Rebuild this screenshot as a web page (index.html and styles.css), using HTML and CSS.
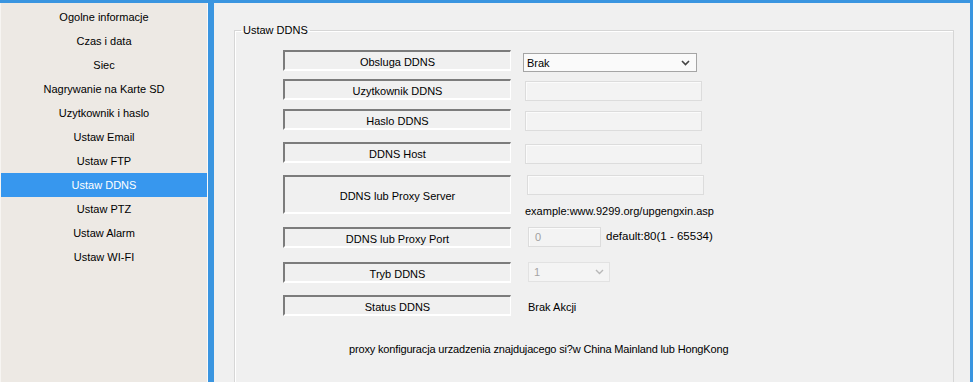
FILE: index.html
```html
<!DOCTYPE html>
<html lang="pl">
<head>
  <meta charset="UTF-8">
  <title>Ustaw DDNS</title>
  <link rel="stylesheet" href="styles.css">
</head>
<body>
  <div class="top-bar"></div>
  <div class="frame">
    <!-- menu po lewej -->
    <ul class="menu">
      <li>Ogolne informacje</li>
      <li>Czas i data</li>
      <li>Siec</li>
      <li>Nagrywanie na Karte SD</li>
      <li>Uzytkownik i haslo</li>
      <li>Ustaw Email</li>
      <li>Ustaw FTP</li>
      <li class="active">Ustaw DDNS</li>
      <li>Ustaw PTZ</li>
      <li>Ustaw Alarm</li>
      <li>Ustaw WI-FI</li>
    </ul>
    <div class="splitter"></div>
    <div class="content">
      <fieldset class="group">
        <legend>Ustaw DDNS</legend>
        <div class="form">
          <div class="row h29">
            <div class="label">Obsluga DDNS</div>
            <div class="select">
              <span>Brak</span>
              <svg width="9" height="6" viewBox="0 0 9 6"><polyline points="1,1 4.5,4.5 8,1" fill="none" stroke="#444" stroke-width="1.6"/></svg>
            </div>
          </div>
          <div class="row h30">
            <div class="label">Uzytkownik DDNS</div>
            <div class="input"></div>
          </div>
          <div class="row h33">
            <div class="label">Haslo DDNS</div>
            <div class="input"></div>
          </div>
          <div class="row h33">
            <div class="label">DDNS Host</div>
            <div class="input"></div>
          </div>
          <div class="row h52">
            <div class="label tall">DDNS lub Proxy Server</div>
            <div class="stack">
              <div class="input"></div>
              <div class="hint">example:www.9299.org/upgengxin.asp</div>
            </div>
          </div>
          <div class="row h35">
            <div class="label">DDNS lub Proxy Port</div>
            <div class="input small">0</div>
            <div class="note">default:80(1 - 65534)</div>
          </div>
          <div class="row h33">
            <div class="label">Tryb DDNS</div>
            <div class="select off">
              <span>1</span>
              <svg width="9" height="6" viewBox="0 0 9 6"><polyline points="1,1 4.5,4.5 8,1" fill="none" stroke="#b8b8b8" stroke-width="1.4"/></svg>
            </div>
          </div>
          <div class="row">
            <div class="label">Status DDNS</div>
            <div class="status">Brak Akcji</div>
          </div>
          <p class="proxy-info">proxy konfiguracja urzadzenia znajdujacego si?w China Mainland lub HongKong</p>
        </div>
      </fieldset>
    </div>
    <div class="edge"></div>
  </div>
</body>
</html>
```

FILE: styles.css
```css
html, body { margin: 0; padding: 0; height: 100%; overflow: hidden; }
body {
  background: #f0f0f0;
  font-family: 'Liberation Sans', Arial, sans-serif;
  font-size: 11px;
  color: #000;
}
.top-bar { height: 3px; background: #3a95e0; }
.frame { display: flex; height: 379px; }

.menu {
  list-style: none;
  margin: 0;
  padding: 2px 0 0 0;
  width: 206px;
  background: #ede9e4;
  border-left: 1px solid #f7f5f2;
}
.menu li {
  height: 24px;
  line-height: 24px;
  text-align: center;
  cursor: pointer;
}
.menu li.active { background: #3797ee; color: #fff; }

.splitter {
  width: 6px;
  background: #3a95e0;
  border-left: 1px solid #fafafa;
}
.content { flex: 1; background: #f0f0f0; overflow: hidden; }
.edge { width: 3px; background: #3a95e0; }

.group {
  margin: 20px 16px 0 20px;
  padding: 0;
  height: 380px;
  border: 1px solid #d6d6d6;
  box-shadow: inset 1px 1px 0 #fff;
}
.group legend {
  margin-left: 6px;
  padding: 0 2px;
  line-height: 14px;
}

.form { padding: 13px 0 0 48px; }
.row { display: flex; align-items: flex-start; height: 33px; }
.row.h29 { height: 29px; }
.row.h30 { height: 30px; }
.row.h35 { height: 35px; }
.row.h52 { height: 52px; }

.label {
  width: 225px;
  height: 17px;
  line-height: 20px;
  text-align: center;
  border-top: 2px solid #7c7c7c;
  border-left: 2px solid #7c7c7c;
  border-right: 1px solid #fff;
  border-bottom: 2px solid #fff;
  margin-right: 12px;
  overflow: hidden;
}
.label.tall { height: 35px; line-height: 38px; }

.select {
  display: flex;
  align-items: center;
  justify-content: space-between;
  box-sizing: border-box;
  width: 174px;
  height: 19px;
  margin-top: 3px;
  padding: 0 6px 0 3px;
  background: #fafafa;
  border: 1px solid #a5a5a5;
}
.select.off {
  width: 82px;
  height: 20px;
  margin: 0 0 0 5px;
  padding: 0 5px;
  background: #f4f4f4;
  border-color: #e2e2e2;
  color: #a4a4a4;
}

.input {
  box-sizing: border-box;
  width: 177px;
  height: 20px;
  margin: 2px 0 0 2px;
  background: #f3f3f3;
  border: 1px solid #dcdcdc;
  box-shadow: inset 1px 1px 0 #fbfbfb;
}
.input.small {
  width: 73px;
  margin: 0 0 0 5px;
  padding-left: 6px;
  line-height: 18px;
  color: #a0a0a0;
}
.stack { display: flex; flex-direction: column; }
.stack .input { margin: 0 0 0 4px; }
.hint { margin: 10px 0 0 2px; }
.note { margin: 3px 0 0 5px; font-size: 11.5px; }
.status { margin: 4px 0 0 5px; line-height: 16px; }

.proxy-info {
  margin: 15px 0 0 66px;
  letter-spacing: -0.16px;
}
```
